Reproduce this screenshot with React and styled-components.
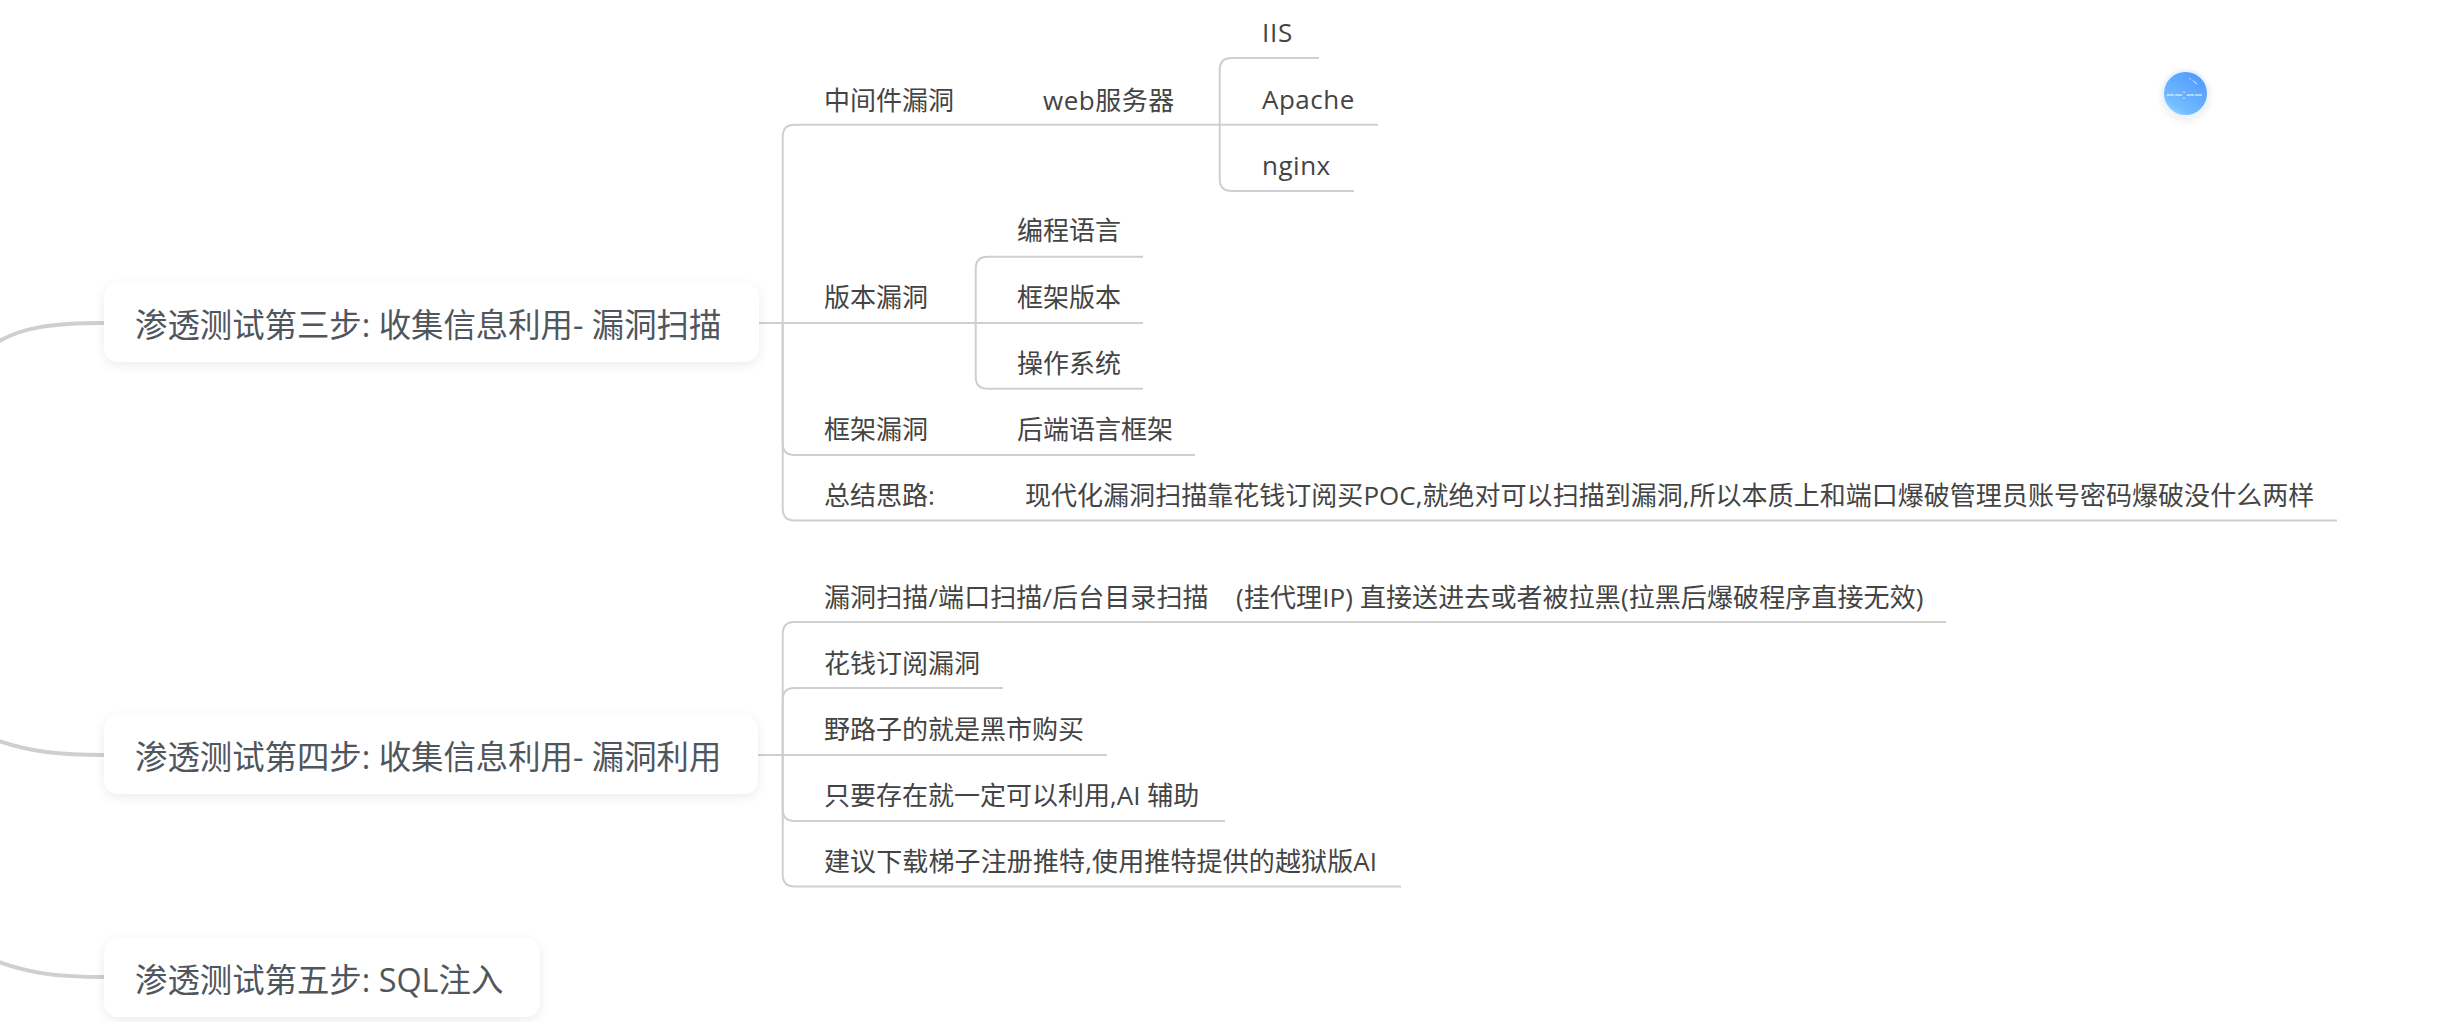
import React from 'react'
import styled, { createGlobalStyle } from 'styled-components'

const GlobalStyle = createGlobalStyle`
  html, body {
    margin: 0;
    padding: 0;
    background: #fff;
  }
  body {
    font-family: "Open Sans", "Noto Sans CJK SC", sans-serif;
  }
`

const Canvas = styled.div`
  position: relative;
  width: 2441px;
  height: 1022px;
  overflow: hidden;
  background: #fff;
`

const Links = styled.svg`
  position: absolute;
  left: 0;
  top: 0;
`

const Topic = styled.div`
  position: absolute;
  left: ${p => p.$x}px;
  top: ${p => p.$y - 40}px;
  width: ${p => p.$w}px;
  height: 79px;
  box-sizing: border-box;
  padding-left: 31px;
  display: flex;
  align-items: center;
  background: #fff;
  border-radius: 14px;
  box-shadow: 0 3px 12px rgba(0, 0, 0, 0.08);
  color: #4f565d;
  font-size: 32.4px;
  white-space: nowrap;
`

const Label = styled.div`
  position: absolute;
  left: ${p => p.$x}px;
  top: ${p => p.$y - 21}px;
  line-height: 40px;
  font-size: 26px;
  letter-spacing: ${p => p.$track || 0}px;
  color: #444;
  white-space: pre;
`

const Badge = styled.div`
  position: absolute;
  left: 2161px;
  top: 69px;
  width: 49px;
  height: 49px;
  box-sizing: border-box;
  border: 3px solid #eaf5fd;
  border-radius: 50%;
  background: linear-gradient(215deg, #4a94ff 0%, #74bcff 75%, #a5deff 100%);
  box-shadow: 0 3px 7px rgba(0, 0, 0, 0.07);
  display: flex;
  align-items: center;
  justify-content: center;
`

const topics = [
  { x: 104, y: 323, w: 655, text: '渗透测试第三步: 收集信息利用- 漏洞扫描' },
  { x: 104, y: 755, w: 654, text: '渗透测试第四步: 收集信息利用- 漏洞利用' },
  { x: 104, y: 978, w: 436, text: '渗透测试第五步: SQL注入' },
]

const labels = [
  { x: 824, y: 101, text: '中间件漏洞' },
  { x: 1043, y: 101, track: 0.5, text: 'web服务器' },
  { x: 1262, y: 33, track: 0.7, text: 'IIS' },
  { x: 1262, y: 100, track: 0.5, text: 'Apache' },
  { x: 1262, y: 166, track: 0.5, text: 'nginx' },
  { x: 824, y: 298, text: '版本漏洞' },
  { x: 1017, y: 231, text: '编程语言' },
  { x: 1017, y: 298, text: '框架版本' },
  { x: 1017, y: 364, text: '操作系统' },
  { x: 824, y: 430, text: '框架漏洞' },
  { x: 1017, y: 430, text: '后端语言框架' },
  { x: 824, y: 496, text: '总结思路:' },
  { x: 1025, y: 496, track: 0.03, text: '现代化漏洞扫描靠花钱订阅买POC,就绝对可以扫描到漏洞,所以本质上和端口爆破管理员账号密码爆破没什么两样' },
  { x: 824, y: 598, track: 0.1, text: '漏洞扫描/端口扫描/后台目录扫描    (挂代理IP) 直接送进去或者被拉黑(拉黑后爆破程序直接无效)' },
  { x: 824, y: 664, text: '花钱订阅漏洞' },
  { x: 824, y: 730, text: '野路子的就是黑市购买' },
  { x: 824, y: 796, text: '只要存在就一定可以利用,AI 辅助' },
  { x: 824, y: 862, track: 0.12, text: '建议下载梯子注册推特,使用推特提供的越狱版AI' },
]

// one vertical at x, children above mid bend up into it, children below bend down
const brackets = [
  { x: 782.7, mid: 323, kids: [[124.7, 1220], [323, 1143], [455, 1195], [520.5, 2337]] },
  { x: 975.7, mid: 323, kids: [[256.7, 1143], [323, 1143], [388.7, 1143]] },
  { x: 1219.7, mid: 124.7, kids: [[58, 1319], [124.7, 1378], [191, 1354]] },
  { x: 782.7, mid: 755, kids: [[622, 1946], [688, 1003], [755, 1107], [821, 1225], [886.5, 1401]] },
]

const kidPath = (x, mid, [y, end]) => {
  const r = 12
  if (y === mid) return `M${x} ${y}H${end}`
  const from = y < mid ? y + r : y - r
  return `M${x} ${mid}V${from}Q${x} ${y} ${x + r} ${y}H${end}`
}

function App() {
  return (
    <Canvas>
      <GlobalStyle />
      <Links width="2441" height="1022" fill="none">
        <path d="M-4 343C20 328 50 323 104 323" stroke="#cfcfcf" strokeWidth="4" />
        <path d="M-4 740C30 752 60 755 104 755" stroke="#cfcfcf" strokeWidth="4" />
        <path d="M-4 961C30 974 60 977 104 977" stroke="#cfcfcf" strokeWidth="4" />
        <path d="M759 323H783M758 755H783" stroke="#cfcfcf" strokeWidth="2" />
        {brackets.map(b => b.kids.map(k => (
          <path key={`${b.x}-${k[0]}`} d={kidPath(b.x, b.mid, k)} stroke="#cfcfcf" strokeWidth="2" />
        )))}
      </Links>
      {topics.map(t => (
        <Topic key={t.text} $x={t.x} $y={t.y} $w={t.w}>{t.text}</Topic>
      ))}
      {labels.map(l => (
        <Label key={l.text} $x={l.x} $y={l.y} $track={l.track}>{l.text}</Label>
      ))}
      <Badge>
        <svg width="43" height="43" viewBox="0 0 43 43" fill="none" stroke="#fff" strokeWidth="1">
          <path d="M2.7 23H10M11 23H18M22.7 23H30M31 23H38" />
          <path d="M20 19.5V21M20 25.5V27" />
          <path d="M25.5 6.3L27 7.3M28.7 8.7L33.3 12" opacity="0.75" />
        </svg>
      </Badge>
    </Canvas>
  )
}

export default App
